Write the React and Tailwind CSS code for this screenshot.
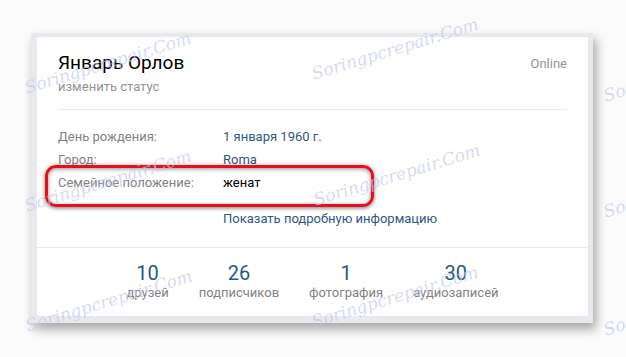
import React from 'react'

const rows = [
    { label: 'День рождения:', value: '1 января 1960 г.', link: true },
    { label: 'Город:', value: 'Roma', link: true },
    { label: 'Семейное положение:', value: 'женат', link: false },
]

const counters = [
    { num: '10', label: 'друзей' },
    { num: '26', label: 'подписчиков' },
    { num: '1', label: 'фотография' },
    { num: '30', label: 'аудиозаписей' },
]

// left-middle points of each watermark line
const marks = [
    { x: 25, y: 88 }, { x: 312, y: 74 }, { x: 604, y: 96 },
    { x: 25, y: 206 }, { x: 314, y: 200 }, { x: 604, y: 212 },
    { x: 26, y: 326 }, { x: 312, y: 322 }, { x: 604, y: 330 },
]

const Watermark = ({ x, y }) => (
    <div
        className="absolute pointer-events-none whitespace-nowrap text-[17px] leading-[20px] italic text-[#c3cae9]/70 font-['DejaVu_Serif',serif] origin-left -rotate-[17deg]"
        style={{ left: x, top: y - 10 }}
    >
        Soringpcrepair.Com
    </div>
)

export default function App() {
    return (
        <div className="relative w-[626px] h-[357px] overflow-hidden bg-[#fbfbfb] pt-[33px] pl-[31px] font-['Roboto',sans-serif]">
            <div className="w-[562px] h-[290px] bg-[#e8e9ec] pt-[4px] pl-[6px] shadow-[3px_6px_10px_rgba(0,0,0,0.35)]">
                <div className="w-[551px] h-[279px] bg-white rounded-[2px]">
                    <div className="mx-[21px] pt-[14px] pb-[14px] border-b border-[#e7e8ec] flex justify-between items-start">
                        <div>
                            <div className="text-[19px] leading-[24px] text-black">Январь Орлов</div>
                            <div className="mt-[4px] text-[13px] leading-[16px] text-[#939393]">изменить статус</div>
                        </div>
                        <div className="mt-[5px] text-[13px] leading-[16px] text-[#939393]">Online</div>
                    </div>
                    <div className="pl-[21px] pt-[15px] pb-[17px] border-b border-[#e7e8ec] text-[13px] leading-[23px]">
                        {rows.map((r) => (
                            <div key={r.label} className="flex">
                                <div className="w-[165px] text-[#828282]">{r.label}</div>
                                <div className={r.link ? 'text-[#2a5885]' : 'text-black'}>{r.value}</div>
                            </div>
                        ))}
                        <div className="mt-[13px] pl-[165px] text-[#2a5885]">Показать подробную информацию</div>
                    </div>
                    <div className="flex justify-center pt-[13px]">
                        {counters.map((c) => (
                            <div key={c.label} className="px-[15px] flex flex-col items-center">
                                <div className="text-[20px] leading-[24px] text-[#2a5885]">{c.num}</div>
                                <div className="text-[13px] leading-[16px] text-[#828282]">{c.label}</div>
                            </div>
                        ))}
                    </div>
                </div>
            </div>

            <div className="absolute left-[45px] top-[165px] w-[329px] h-[42px] rounded-[11px] border-[3px] border-[#e5101b] shadow-[0_1px_4px_rgba(0,0,0,0.55),inset_0_1px_4px_rgba(0,0,0,0.45)]" />

            {marks.map((m, i) => (
                <Watermark key={i} x={m.x} y={m.y} />
            ))}
        </div>
    )
}
